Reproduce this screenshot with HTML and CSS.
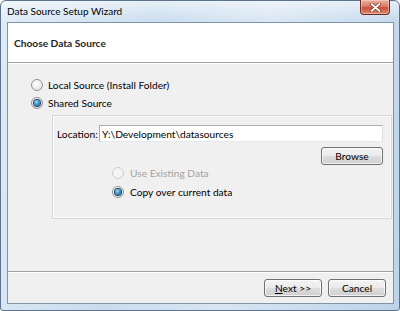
FILE: index.html
```html
<!DOCTYPE html>
<html lang="en">
<head>
  <meta charset="UTF-8">
  <meta name="viewport" content="width=device-width, initial-scale=1.0">
  <title>Data Source Setup Wizard</title>
  <link rel="stylesheet" href="styles.css">
</head>
<body>
  <div class="window">
    <div class="titlebar">
      <span class="title">Data Source Setup Wizard</span>
      <button class="close-btn" title="Close">
        <svg width="11" height="9" viewBox="0 0 11 9">
          <path d="M1.5 1 L9.5 8 M9.5 1 L1.5 8" stroke="#7a2a1e" stroke-width="3.2" stroke-linecap="round"/>
          <path d="M1.5 1 L9.5 8 M9.5 1 L1.5 8" stroke="#ffffff" stroke-width="1.8" stroke-linecap="round"/>
        </svg>
      </button>
    </div>

    <div class="client">
      <div class="header">
        <h1>Choose Data Source</h1>
      </div>

      <div class="content">
        <label class="radio"><span class="dot"></span>Local Source (Install Folder)</label>
        <label class="radio checked"><span class="dot"></span>Shared Source</label>

        <div class="group">
          <div class="location-row">
            <span class="field-label">Location:</span>
            <input class="field" type="text" value="Y:\Development\datasources">
          </div>
          <div class="browse-row">
            <button class="btn browse-btn">Browse</button>
          </div>
          <div class="sub-options">
            <label class="radio disabled"><span class="dot"></span>Use Existing Data</label>
            <label class="radio checked"><span class="dot"></span>Copy over current data</label>
          </div>
        </div>
      </div>

      <div class="footer">
        <button class="btn"><u>N</u>ext &gt;&gt;</button>
        <button class="btn">Cancel</button>
      </div>
    </div>
  </div>
</body>
</html>
```

FILE: styles.css
```css
* {
  margin: 0;
  padding: 0;
  box-sizing: border-box;
}

body {
  width: 400px;
  height: 311px;
  overflow: hidden;
  font-family: Lato, 'Noto Sans', sans-serif;
  font-size: 10.2px;
  color: #000;
  background: #fff;
}

.window {
  width: 400px;
  height: 311px;
  display: flex;
  flex-direction: column;
  padding: 0 5px 6px 6px;
  border: 1px solid #5d738b;
  border-radius: 6px 6px 3px 3px;
  background:
    linear-gradient(to bottom, rgba(255, 255, 255, 0.55), rgba(255, 255, 255, 0) 22px),
    linear-gradient(100deg, #dfebf6 0%, #c9dcee 35%, #d8e6f3 60%, #bcd3e9 100%);
}

/* title bar */
.titlebar {
  height: 21px;
  display: flex;
  justify-content: space-between;
  align-items: flex-start;
  padding-right: 4px;
}

.title {
  font-size: 10px;
  line-height: 21px;
  color: #000;
}

.close-btn {
  width: 30px;
  height: 15px;
  margin-top: -1px;
  border: 1px solid #6b2a20;
  border-top: none;
  border-radius: 0 0 4px 4px;
  background: linear-gradient(to bottom, #eab0a2 0%, #d97b66 45%, #c8503a 55%, #dc8a73 100%);
  box-shadow: inset 0 0 0 1px rgba(255, 220, 210, 0.5);
  display: flex;
  align-items: center;
  justify-content: center;
}

/* client area */
.client {
  flex: 1;
  display: flex;
  flex-direction: column;
  background: #f0f0f0;
  border: 1px solid #7f93a9;
}

.header {
  height: 40px;
  background: #fff;
  border-bottom: 1px solid #a0a0a0;
  display: flex;
  align-items: center;
  padding-left: 6px;
}

.header h1 {
  font-size: 10.2px;
  font-weight: 700;
  color: #1e1e1e;
}

.content {
  flex: 1;
  border-top: 1px solid #fff;
  padding: 12px 1px 0 23px;
  display: flex;
  flex-direction: column;
}

/* radio buttons */
.radio {
  height: 18px;
  display: flex;
  align-items: center;
}

.dot {
  width: 12px;
  height: 12px;
  margin-right: 5px;
  border-radius: 50%;
  border: 1px solid #8f9396;
  background: radial-gradient(circle at 40% 35%, #ffffff 0%, #f0f0f0 50%, #d6d8da 100%);
  display: flex;
  align-items: center;
  justify-content: center;
}

.radio.checked .dot::after {
  content: '';
  width: 6px;
  height: 6px;
  border-radius: 50%;
  background: radial-gradient(circle at 40% 35%, #9be0f5 0%, #2b84c2 55%, #1b4f7c 100%);
  box-shadow: 0 0 0 1px #1f3f5c;
}

.radio.disabled {
  color: #a3a3a3;
}

.radio.disabled .dot {
  border-color: #cacccf;
  background: #f4f4f4;
}

/* group panel */
.group {
  height: 104px;
  margin: 3px 0 0 21px;
  padding: 9px 8px 0 4px;
  border: 1px solid #d5d8db;
  box-shadow: inset 0 0 0 1px #fafafa;
  display: flex;
  flex-direction: column;
}

.location-row {
  display: flex;
  align-items: center;
}

.field-label {
  width: 42px;
}

.field {
  flex: 1;
  height: 17px;
  padding: 0 2px;
  border: 1px solid #abadb3;
  border-bottom-color: #e3e9ef;
  border-right-color: #dbdfe6;
  font-family: inherit;
  font-size: 10.2px;
  color: #000;
  background: #fff;
}

.browse-row {
  display: flex;
  justify-content: flex-end;
  margin-top: 5px;
}

.sub-options {
  margin: 0 0 0 55px;
  display: flex;
  flex-direction: column;
  gap: 3px;
}

.sub-options .radio {
  height: 16px;
}

.sub-options .dot {
  margin-right: 6px;
}

/* buttons */
.btn {
  height: 18px;
  border: 1px solid #707070;
  border-radius: 3px;
  background: linear-gradient(to bottom, #f3f3f3 0%, #ebebeb 48%, #dddddd 52%, #cfcfcf 100%);
  box-shadow: inset 0 0 0 1px rgba(255, 255, 255, 0.7);
  font-family: inherit;
  font-size: 10.2px;
  color: #000;
}

.browse-btn {
  width: 62px;
}

.footer {
  height: 32px;
  border-top: 1px solid #a0a0a0;
  box-shadow: inset 0 1px 0 #fff;
  display: flex;
  align-items: center;
  justify-content: flex-end;
  gap: 6px;
  padding: 1px 7px 0 0;
}

.footer .btn {
  width: 58px;
}
```
